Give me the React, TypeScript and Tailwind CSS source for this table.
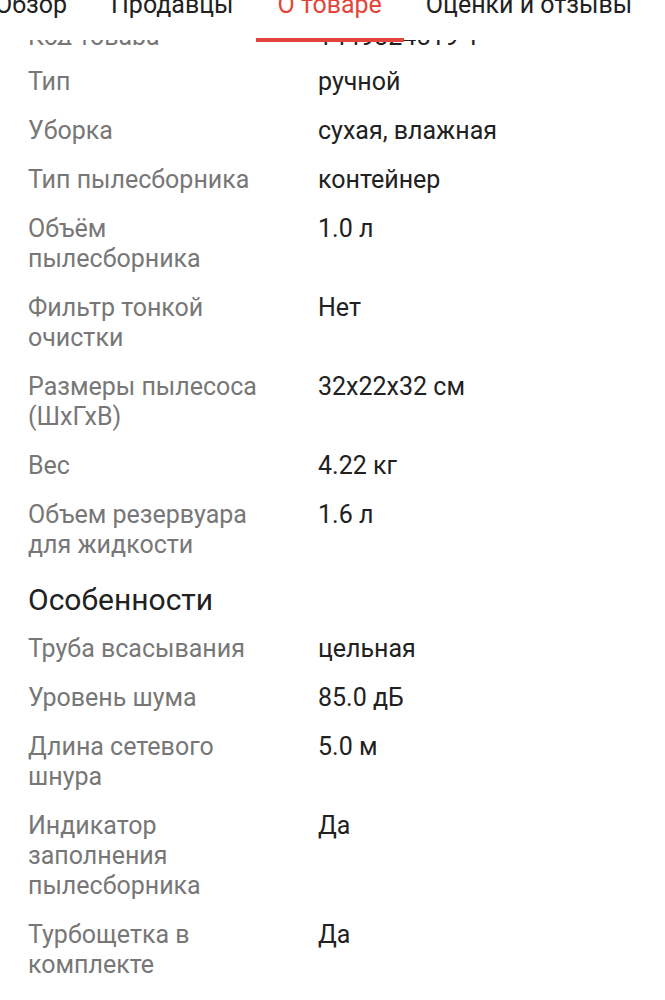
import React from "react";

type Spec = { label: string; value: string };

const tabs = ["Обзор", "Продавцы", "О товаре", "Оценки и отзывы"];
const activeTab = "О товаре";

const general: Spec[] = [
  { label: "Тип", value: "ручной" },
  { label: "Уборка", value: "сухая, влажная" },
  { label: "Тип пылесборника", value: "контейнер" },
  { label: "Объём пылесборника", value: "1.0 л" },
  { label: "Фильтр тонкой очистки", value: "Нет" },
  { label: "Размеры пылесоса (ШхГхВ)", value: "32x22x32 см" },
  { label: "Вес", value: "4.22 кг" },
  { label: "Объем резервуара для жидкости", value: "1.6 л" },
];

const features: Spec[] = [
  { label: "Труба всасывания", value: "цельная" },
  { label: "Уровень шума", value: "85.0 дБ" },
  { label: "Длина сетевого шнура", value: "5.0 м" },
  { label: "Индикатор заполнения пылесборника", value: "Да" },
  { label: "Турбощетка в комплекте", value: "Да" },
];

function SpecRow({ item }: { item: Spec }) {
  return (
    <div className="flex items-start text-[25px] leading-[30px]">
      <div className="w-[242px] shrink-0 text-[#777777]">{item.label}</div>
      <div className="pl-[48px] text-[#212121]">{item.value}</div>
    </div>
  );
}

function SpecList({ items }: { items: Spec[] }) {
  return (
    <div className="flex flex-col gap-[19px]">
      {items.map((item, i) => (
        <SpecRow key={i} item={item} />
      ))}
    </div>
  );
}

export default function App() {
  return (
    <div
      className="min-h-[1000px] w-[665px] overflow-hidden bg-white"
      style={{ fontFamily: "Roboto, 'Noto Sans', sans-serif" }}
    >
      {/* tab bar, scrolled so the labels are partly off the top */}
      <div className="relative z-10 h-[40px] bg-white">
        <div className="-ml-[27px] flex h-[40px] items-start">
          {tabs.map((t) => (
            <div key={t} className="relative h-[40px] shrink-0 px-[22px]">
              <div
                className={
                  "-mt-[10px] whitespace-nowrap text-[25px] leading-[30px] " +
                  (t === activeTab ? "text-[#e3453a]" : "text-[#212121]")
                }
              >
                {t}
              </div>
              {t === activeTab && (
                <div className="absolute -bottom-[2px] left-0 right-0 h-[4px] bg-[#e3453a]" />
              )}
            </div>
          ))}
        </div>
      </div>

      <div className="px-[28px]">
        {/* row hidden under the tab bar */}
        <div className="h-[5px] overflow-hidden">
          <div className="-mt-[18px]">
            <SpecRow item={{ label: "Код товара", value: "1449324519-1" }} />
          </div>
        </div>

        <div className="mt-[22px]">
          <SpecList items={general} />
        </div>

        <h2 className="mt-[22px] text-[30px] leading-[36px] font-normal text-[#212121]">
          Особенности
        </h2>

        <div className="mt-[16px] pb-10">
          <SpecList items={features} />
        </div>
      </div>
    </div>
  );
}
